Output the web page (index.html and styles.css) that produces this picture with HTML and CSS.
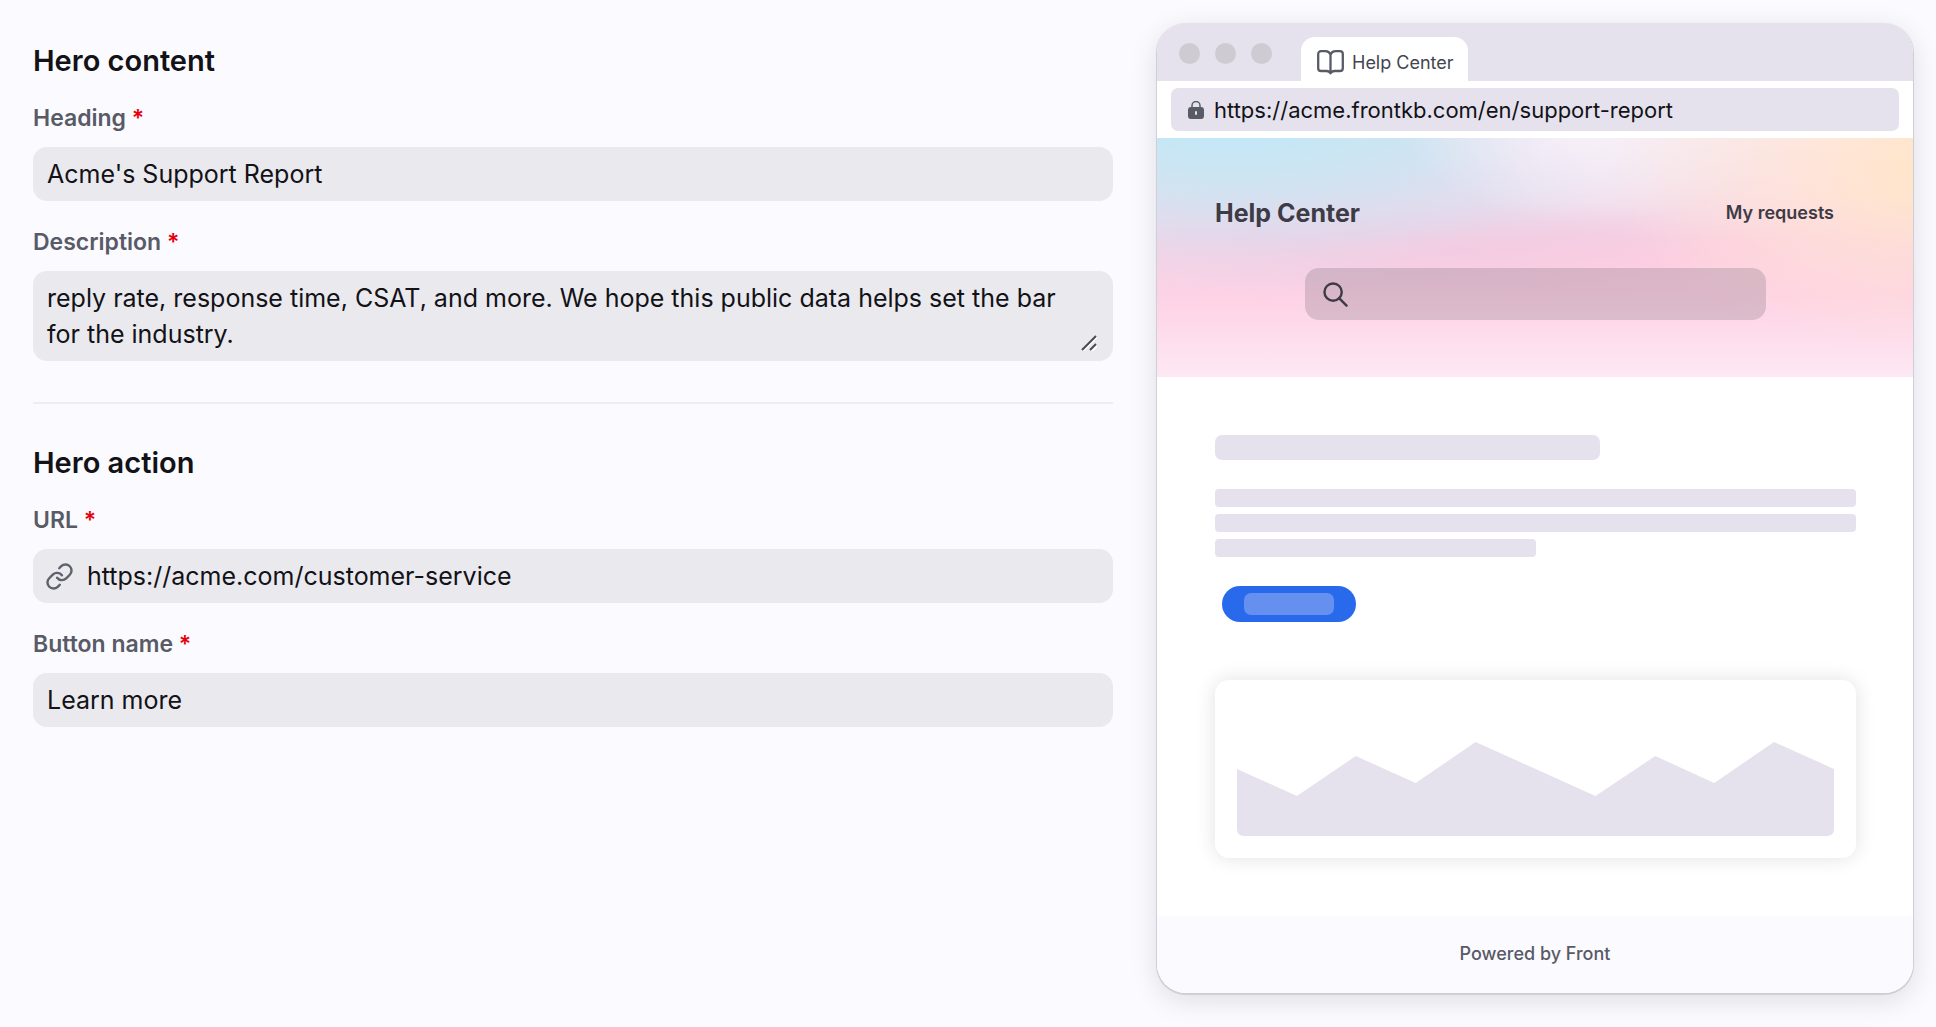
FILE: index.html
```html
<!DOCTYPE html>
<html lang="en">
<head>
<meta charset="utf-8">
<meta name="viewport" content="width=device-width, initial-scale=1">
<title>Hero settings</title>
<link rel="stylesheet" href="styles.css">
</head>
<body>
<main class="page">
  <form class="settings">
    <section class="group">
      <h2 class="group-title">Hero content</h2>
      <div class="field">
        <label class="label" for="heading">Heading <span class="required">*</span></label>
        <input class="control" id="heading" type="text" value="Acme's Support Report" required>
      </div>
      <div class="field">
        <label class="label" for="description">Description <span class="required">*</span></label>
        <div class="area">
          <textarea class="control control-area" id="description" rows="2" required>reply rate, response time, CSAT, and more. We hope this public data helps set the bar for the industry.</textarea>
          <svg class="grip" viewBox="0 0 16 16" aria-hidden="true"><path d="M2 16 16 2M10 17l7-7" stroke="#fff"/><path d="M1 15 15 1M9 15l6-6" stroke="#4b4b50"/></svg>
        </div>
      </div>
    </section>
    <hr class="divider">
    <section class="group">
      <h2 class="group-title">Hero action</h2>
      <div class="field">
        <label class="label" for="url">URL <span class="required">*</span></label>
        <div class="control control-icon">
          <svg class="link-icon" viewBox="0 0 24 24" aria-hidden="true"><path d="M10 13a5 5 0 0 0 7.54.54l3-3a5 5 0 0 0-7.07-7.07l-1.72 1.71"/><path d="M14 11a5 5 0 0 0-7.54-.54l-3 3a5 5 0 0 0 7.07 7.07l1.71-1.71"/></svg>
          <input class="bare-input" id="url" type="text" value="https://acme.com/customer-service" required>
        </div>
      </div>
      <div class="field">
        <label class="label" for="button-name">Button name <span class="required">*</span></label>
        <input class="control" id="button-name" type="text" value="Learn more" required>
      </div>
    </section>
  </form>

  <section class="browser" aria-label="Preview">
    <div class="tabs">
      <div class="dots"><span class="dot"></span><span class="dot"></span><span class="dot"></span></div>
      <div class="tab">
        <svg class="book-icon" viewBox="0 0 27 25" aria-hidden="true"><path d="M13.500 4.500C12.500 2.200 11 1.200 8.500 1.200H4A2.800 2.800 0 0 0 1.200 4v14.200A2.800 2.800 0 0 0 4 21h5.500c1.800 0 3.200.700 4 2.300.800-1.600 2.200-2.300 4-2.300H23a2.800 2.800 0 0 0 2.800-2.800V4A2.800 2.800 0 0 0 23 1.200h-4.500c-2.500 0-4 1-5 3.300zV23"/></svg>
        <span>Help Center</span>
      </div>
    </div>
    <div class="bar">
      <div class="address">
        <svg class="lock-icon" viewBox="0 0 16 18" aria-hidden="true"><path d="M4 8V4.500a4 4 0 0 1 8 0V8" fill="none" stroke="#585b66" stroke-width="1.500"/><rect x="0" y="6" width="16" height="12" rx="3" fill="#585b66"/><rect x="7" y="10" width="2" height="4" rx="1" fill="#e5e2ed"/></svg>
        <span>https://acme.frontkb.com/en/support-report</span>
      </div>
    </div>
    <div class="hero">
      <div class="hero-nav">
        <strong class="brand">Help Center</strong>
        <a class="requests" href="#">My requests</a>
      </div>
      <div class="search">
        <svg class="search-icon" viewBox="0 0 26 26" aria-hidden="true"><circle cx="10.500" cy="10.500" r="9"/><path d="m17 17 7.500 7.500"/></svg>
        <input class="bare-input" type="search" aria-label="Search">
      </div>
    </div>
    <div class="content">
      <div class="skeleton skeleton-title"></div>
      <div class="lines">
        <div class="skeleton"></div>
        <div class="skeleton"></div>
        <div class="skeleton skeleton-half"></div>
      </div>
      <button class="action" type="button" aria-label="Hero action"><span class="action-text"></span></button>
      <div class="card">
        <svg class="chart" viewBox="0 0 598 94" preserveAspectRatio="none" aria-hidden="true"><path d="M0 27 60 54 119 14 179 41 239 0 359 54 419 14 478 41 538 0 598 27V87q0 7-7 7H7q-7 0-7-7z"/></svg>
      </div>
    </div>
    <footer class="footer">Powered by Front</footer>
  </section>
</main>
</body>
</html>
```
FILE: styles.css
```css
* {
  box-sizing: border-box;
}

body {
  margin: 0;
  background: #fbfaff;
  color: #121217;
  font-family: Inter, "Liberation Sans", sans-serif;
}

.page {
  display: grid;
  grid-template-columns: 1080fr 756fr;
  gap: 44px;
  align-items: start;
  padding: 23px 23px 32px 33px;
}

.settings {
  padding-top: 20px;
}

.group {
  display: flex;
  flex-direction: column;
}

.group-title {
  margin: 0 0 22px;
  font-size: 29px;
  font-weight: 600;
  line-height: 36px;
}

.field {
  display: flex;
  flex-direction: column;
  gap: 11px;
}

.field + .field {
  margin-top: 24px;
}

.label {
  color: #585b66;
  font-size: 23px;
  font-weight: 600;
  line-height: 35px;
}

.required {
  color: #e5000c;
}

.control {
  display: block;
  width: 100%;
  height: 54px;
  margin: 0;
  padding: 0 14px;
  border: 0;
  border-radius: 14px;
  background: #eae9ee;
  color: #121217;
  font-family: inherit;
  font-size: 25px;
  line-height: 36px;
}

.area {
  position: relative;
}

.control-area {
  height: 90px;
  padding: 9px 32px 9px 14px;
  overflow: hidden;
  resize: none;
}

.grip {
  position: absolute;
  right: 16px;
  bottom: 10px;
  width: 16px;
  height: 16px;
  fill: none;
  stroke-width: 2;
}

.control-icon {
  display: flex;
  align-items: center;
  gap: 13px;
  padding-left: 12px;
}

.link-icon {
  flex: none;
  width: 29px;
  height: 29px;
  fill: none;
  stroke: #5f626c;
  stroke-width: 2;
  stroke-linecap: round;
  stroke-linejoin: round;
}

.bare-input {
  flex: 1;
  min-width: 0;
  padding: 0;
  border: 0;
  outline: 0;
  background: none;
  color: inherit;
  font: inherit;
}

.divider {
  width: 100%;
  height: 2px;
  margin: 41px 0;
  border: 0;
  background: #eeedf2;
}

.browser {
  overflow: hidden;
  border-radius: 29px;
  background: #fff;
  box-shadow: 0 1px 0 1px #d0cfd6, 0 7px 28px rgba(18, 18, 23, 0.12);
}

.tabs {
  display: flex;
  align-items: flex-end;
  gap: 29px;
  height: 58px;
  padding-left: 22px;
  background: #e5e2ed;
}

.dots {
  display: flex;
  gap: 15px;
  padding-bottom: 17px;
}

.dot {
  width: 21px;
  height: 21px;
  border-radius: 50%;
  background: #cecbd3;
}

.tab {
  display: flex;
  align-items: center;
  gap: 8px;
  height: 44px;
  padding: 6px 14px 0 16px;
  border-radius: 14px 14px 0 0;
  background: #fff;
  color: #44454e;
  font-size: 18px;
}

.book-icon {
  width: 27px;
  height: 25px;
  fill: none;
  stroke: #585b66;
  stroke-width: 2.3;
  stroke-linejoin: round;
}

.bar {
  padding: 7px 14px;
}

.address {
  display: flex;
  align-items: center;
  gap: 10px;
  height: 43px;
  padding-left: 17px;
  border-radius: 7px;
  background: #e5e2ed;
  font-size: 22px;
}

.lock-icon {
  width: 16px;
  height: 18px;
}

.hero {
  display: flex;
  flex-direction: column;
  gap: 38px;
  padding: 57px 79px 57px 58px;
  background:
    radial-gradient(ellipse 42% 76% at 102% 14%, #ffe5c7 0%, rgba(255, 228, 210, 0.6) 45%, rgba(255, 225, 225, 0) 100%),
    radial-gradient(ellipse 24% 40% at 57% -4%, rgba(252, 242, 249, 0.9) 0%, rgba(252, 238, 246, 0) 100%),
    radial-gradient(ellipse 60% 56% at 10% -6%, #c0e8f8 0%, rgba(203, 229, 242, 0.85) 40%, rgba(215, 222, 240, 0.5) 70%, rgba(230, 218, 238, 0) 100%),
    radial-gradient(ellipse 50% 60% at 0% 10%, rgba(205, 228, 243, 0.5) 0%, rgba(225, 218, 238, 0) 100%),
    radial-gradient(ellipse 60% 70% at 30% 0%, rgba(205, 220, 240, 0.7) 0%, rgba(225, 218, 238, 0) 100%),
    radial-gradient(ellipse 45% 20% at 40% 46%, rgba(255, 197, 220, 0.8) 0%, rgba(255, 200, 222, 0) 100%),
    linear-gradient(#ffecf2 0%, #fde0ec 22%, #fbd0e3 42%, #fed1e5 65%, #fde8f3 100%);
  color: #3d3b46;
}

.hero-nav {
  display: flex;
  align-items: center;
  justify-content: space-between;
  height: 35px;
}

.brand {
  font-size: 25px;
  font-weight: 700;
}

.requests {
  color: inherit;
  font-size: 18px;
  font-weight: 600;
  text-decoration: none;
}

.search {
  display: flex;
  align-items: center;
  gap: 12px;
  align-self: center;
  width: 461px;
  max-width: 100%;
  height: 52px;
  margin-left: 21px;
  padding: 0 18px;
  border-radius: 14px;
  background: rgba(61, 59, 70, 0.18);
}

.search-icon {
  width: 25px;
  height: 25px;
  fill: none;
  stroke: #3d3b46;
  stroke-width: 2.5;
  stroke-linecap: round;
}

.content {
  padding: 58px 57px 58px 58px;
}

.skeleton {
  height: 18px;
  border-radius: 4px;
  background: #e5e2ed;
}

.skeleton-title {
  width: 60%;
  height: 25px;
  border-radius: 7px;
}

.skeleton-half {
  width: 50%;
}

.lines {
  display: flex;
  flex-direction: column;
  gap: 7px;
  margin-top: 29px;
}

.action {
  display: block;
  margin: 29px 0 0 7px;
  padding: 7px 22px;
  border: 0;
  border-radius: 18px;
  background: #2969eb;
}

.action-text {
  display: block;
  width: 90px;
  height: 22px;
  border-radius: 7px;
  background: #6690f0;
}

.card {
  margin-top: 58px;
  padding: 62px 22px 22px;
  border-radius: 14px;
  background: #fff;
  box-shadow: 0 0 20px rgba(0, 0, 0, 0.12);
}

.chart {
  display: block;
  width: 100%;
  height: 94px;
  fill: #e5e2ed;
}

.footer {
  padding: 24px 0 25px;
  background: #fbfaff;
  color: #585b66;
  font-size: 18px;
  font-weight: 500;
  line-height: 28px;
  text-align: center;
}
```
